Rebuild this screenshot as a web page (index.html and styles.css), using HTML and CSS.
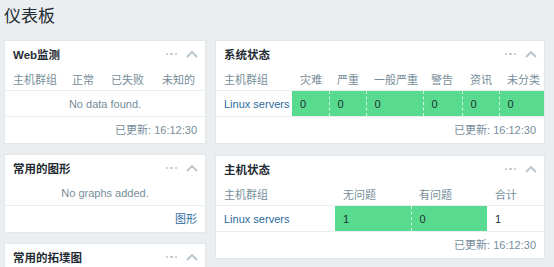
FILE: index.html
```html
<!DOCTYPE html>
<html>
<head>
<meta charset="utf-8">
<link rel="stylesheet" href="styles.css">
</head>
<body>
<h1 class="page-title">仪表板</h1>
<div class="grid">
  <div class="col col-left">
    <section class="widget">
      <div class="w-head"><span class="w-title">Web监测</span><span class="w-icons"><span class="dots"><i></i><i></i><i></i></span><svg class="chev" width="12" height="8" viewBox="0 0 12 8"><path d="M1 7 L6 2 L11 7" fill="none" stroke="#b7c3cb" stroke-width="1.8"/></svg></span></div>
      <table class="tbl web">
        <colgroup><col style="width:61px"><col style="width:39px"><col style="width:51px"><col></colgroup>
        <thead><tr><th class="first">主机群组</th><th>正常</th><th>已失败</th><th>未知的</th></tr></thead>
        <tbody><tr><td colspan="4" class="empty">No data found.</td></tr></tbody>
      </table>
      <div class="w-foot">已更新: 16:12:30</div>
    </section>
    <section class="widget">
      <div class="w-head"><span class="w-title">常用的图形</span><span class="w-icons"><span class="dots"><i></i><i></i><i></i></span><svg class="chev" width="12" height="8" viewBox="0 0 12 8"><path d="M1 7 L6 2 L11 7" fill="none" stroke="#b7c3cb" stroke-width="1.8"/></svg></span></div>
      <div class="w-body-empty">No graphs added.</div>
      <div class="w-foot link-foot"><a class="link">图形</a></div>
    </section>
    <section class="widget">
      <div class="w-head"><span class="w-title">常用的拓墣图</span><span class="w-icons"><span class="dots"><i></i><i></i><i></i></span><svg class="chev" width="12" height="8" viewBox="0 0 12 8"><path d="M1 7 L6 2 L11 7" fill="none" stroke="#b7c3cb" stroke-width="1.8"/></svg></span></div>
    </section>
  </div>
  <div class="col col-right">
    <section class="widget">
      <div class="w-head"><span class="w-title">系统状态</span><span class="w-icons"><span class="dots"><i></i><i></i><i></i></span><svg class="chev" width="12" height="8" viewBox="0 0 12 8"><path d="M1 7 L6 2 L11 7" fill="none" stroke="#b7c3cb" stroke-width="1.8"/></svg></span></div>
      <table class="tbl">
        <colgroup><col style="width:76px"><col style="width:37px"><col style="width:37px"><col style="width:57px"><col style="width:39px"><col style="width:37px"><col></colgroup>
        <thead><tr><th class="first">主机群组</th><th>灾难</th><th>严重</th><th>一般严重</th><th>警告</th><th>资讯</th><th>未分类</th></tr></thead>
        <tbody><tr><td class="first"><a class="link">Linux servers</a></td><td class="ok">0</td><td class="ok sep">0</td><td class="ok sep">0</td><td class="ok sep">0</td><td class="ok sep">0</td><td class="ok sep">0</td></tr></tbody>
      </table>
      <div class="w-foot">已更新: 16:12:30</div>
    </section>
    <section class="widget">
      <div class="w-head"><span class="w-title">主机状态</span><span class="w-icons"><span class="dots"><i></i><i></i><i></i></span><svg class="chev" width="12" height="8" viewBox="0 0 12 8"><path d="M1 7 L6 2 L11 7" fill="none" stroke="#b7c3cb" stroke-width="1.8"/></svg></span></div>
      <table class="tbl">
        <colgroup><col style="width:119px"><col style="width:76px"><col style="width:76px"><col></colgroup>
        <thead><tr><th class="first">主机群组</th><th>无问题</th><th>有问题</th><th>合计</th></tr></thead>
        <tbody><tr><td class="first"><a class="link">Linux servers</a></td><td class="ok">1</td><td class="ok sep">0</td><td class="plain">1</td></tr></tbody>
      </table>
      <div class="w-foot">已更新: 16:12:30</div>
    </section>
  </div>
</div>
</body>
</html>
```
FILE: styles.css
```css
html, body { margin: 0; padding: 0; }
body {
  background: #ebeef0;
  font-family: "Liberation Sans", Arial, "Noto Sans CJK SC", sans-serif;
  font-size: 11px;
  color: #1f2c33;
  padding: 0 9px 0 4px;
  overflow: hidden;
  height: 267px;
}
.page-title {
  margin: 0;
  height: 40px;
  line-height: 34px;
  font-size: 17px;
  font-weight: normal;
  color: #1f2c33;
}
.grid {
  display: grid;
  grid-template-columns: 202px 330px;
  column-gap: 9px;
  align-items: start;
}
.col { display: flex; flex-direction: column; gap: 10px; }
.col-right { gap: 11px; }
.widget {
  background: #fff;
  border: 1px solid #e2e7ea;
  box-sizing: border-box;
}
.w-head {
  height: 26px;
  display: flex;
  align-items: center;
  justify-content: space-between;
  padding: 0 7px 0 8px;
}
.w-title { font-weight: bold; font-size: 11.5px; color: #1f2c33; }
.w-icons { display: flex; align-items: center; gap: 9px; }
.dots { display: flex; gap: 2px; align-items: center; }
.dots i { width: 2.5px; height: 2.5px; border-radius: 50%; background: #bac5cc; display: block; }
.chev { display: block; }
.tbl {
  width: 100%;
  border-collapse: collapse;
  table-layout: fixed;
}
.tbl th {
  text-align: left;
  font-weight: normal;
  color: #768d99;
  height: 23px;
  padding: 0 0 0 8px;
  border-bottom: 1px solid #ebeef0;
  white-space: nowrap;
  overflow: hidden;
}
.tbl.web th { padding-left: 6px; }
.tbl th.first, .tbl td.first { padding-left: 8px; }
.tbl td {
  height: 25px;
  padding: 0 0 0 8px;
  border-bottom: 1px solid #ebeef0;
  white-space: nowrap;
  color: #1f2c33;
}
.tbl td.empty { text-align: center; color: #768d99; padding: 0; }
.tbl td.ok { background: #59db8f; color: #1f2c33; }
.tbl td.sep { border-left: 1px dashed rgba(255,255,255,0.75); }
.link { color: #2b6a9e; text-decoration: none; }
.w-body-empty {
  height: 24px;
  line-height: 24px;
  text-align: center;
  color: #768d99;
  border-bottom: 1px solid #ebeef0;
}
.w-foot {
  height: 26px;
  line-height: 26px;
  text-align: right;
  padding-right: 8px;
  color: #768d99;
}
.link-foot .link { color: #2b6a9e; }
```
